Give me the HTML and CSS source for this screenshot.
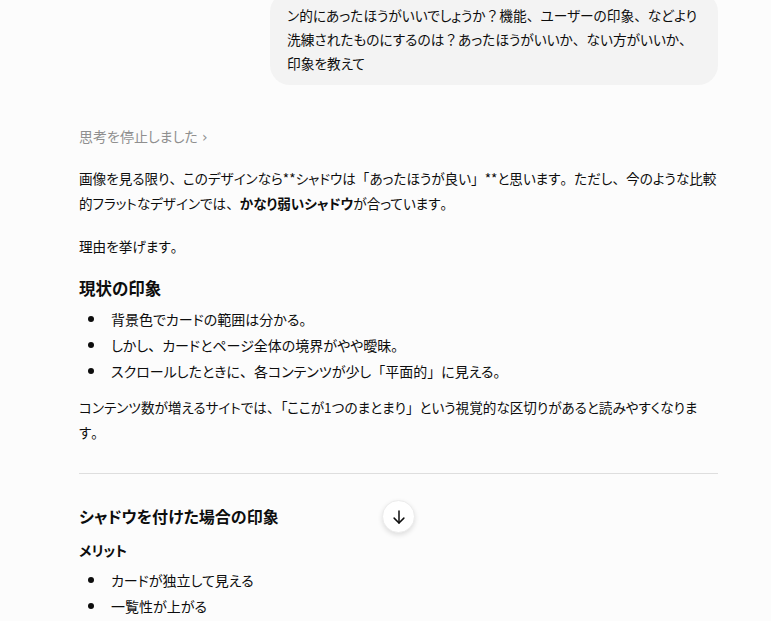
FILE: index.html
```html
<!DOCTYPE html>
<html lang="ja">
<head>
<meta charset="utf-8">
<link rel="stylesheet" href="styles.css">
</head>
<body>
<div class="page">
  <div class="thread">
    <div class="user-row">
      <div class="bubble">ン的にあったほうがいいでしょうか<span class="pn">？</span>機能<span class="pn">、</span>ユーザーの印象<span class="pn">、</span>などより洗練されたものにするのは<span class="pn">？</span>あったほうがいいか<span class="pn">、</span>ない方がいいか<span class="pn">、</span>印象を教えて</div>
    </div>
    <div class="thinking">思考を停止しました <span class="chev">›</span></div>
    <p class="para p1">画像を見る限り<span class="pn">、</span>このデザインなら**シャドウは<span class="pn">「</span>あったほうが良い<span class="pn">」</span>**と思います<span class="pn">。</span>ただし<span class="pn">、</span>今のような比較的フラットなデザインでは<span class="pn">、</span><b>かなり弱いシャドウ</b>が合っています<span class="pn">。</span></p>
    <p class="para p2">理由を挙げます<span class="pn">。</span></p>
    <h3 class="h3">現状の印象</h3>
    <ul class="list l1">
      <li>背景色でカードの範囲は分かる<span class="pn">。</span></li>
      <li>しかし<span class="pn">、</span>カードとページ全体の境界がやや曖昧<span class="pn">。</span></li>
      <li>スクロールしたときに<span class="pn">、</span>各コンテンツが少し<span class="pn">「</span>平面的<span class="pn">」</span>に見える<span class="pn">。</span></li>
    </ul>
    <p class="para p3">コンテンツ数が増えるサイトでは<span class="pn">、</span>「ここが1つのまとまり<span class="pn">」</span>という視覚的な区切りがあると読みやすくなります<span class="pn">。</span></p>
    <hr class="divider">
    <h2 class="h2">シャドウを付けた場合の印象</h2>
    <h4 class="h4">メリット</h4>
    <ul class="list l2">
      <li>カードが独立して見える</li>
      <li>一覧性が上がる</li>
    </ul>
  </div>
  <button class="scroll-btn" aria-label="scroll down">
    <svg width="18" height="18" viewBox="0 0 24 24" fill="none" stroke="#0d0d0d" stroke-width="2" stroke-linecap="round" stroke-linejoin="round"><path d="M12 4v16"/><path d="M5.5 13.5 12 20l6.5-6.5"/></svg>
  </button>
</div>
</body>
</html>
```
FILE: styles.css
```css
html, body {
  margin: 0;
  padding: 0;
  background: #fcfcfc;
  overflow: hidden;
}
body {
  font-family: "Noto Sans CJK JP", "Noto Sans", sans-serif;
  font-feature-settings: "palt";
  color: #0d0d0d;
  font-size: 14px;
}
.pn {
  font-feature-settings: normal;
}
.page {
  position: relative;
  width: 771px;
  height: 621px;
  overflow: hidden;
}
.thread {
  width: 639px;
  margin-left: 79px;
}
.user-row {
  display: flex;
  justify-content: flex-end;
}
.bubble {
  margin-top: -8px;
  width: 414px;
  padding: 11px 17px 10px 17px;
  background: #f3f3f3;
  border-radius: 20px;
  font-size: 13.7px;
  line-height: 24px;
}
.thinking {
  margin-top: 41px;
  line-height: 20px;
  color: #8f8f8f;
}
.chev {
  font-family: "DejaVu Sans", sans-serif;
  font-size: 14px;
  margin-left: 1px;
}
.para {
  margin: 0;
  font-size: 13.6px;
  line-height: 25px;
}
.p1 { margin-top: 19px; }
.p2 { margin-top: 18px; }
.p3 { margin-top: 12px; }
b { font-weight: 700; }
.h3 {
  margin: 17px 0 0;
  font-size: 16.5px;
  line-height: 24px;
  font-weight: 700;
}
.h2 {
  margin: 29px 0 0;
  font-size: 16px;
  line-height: 26px;
  font-weight: 700;
}
.h4 {
  margin: 9px 0 0;
  font-size: 14px;
  line-height: 24px;
  font-weight: 700;
}
.list {
  margin: 0;
  padding: 0;
  list-style: none;
}
.l1 { margin-top: 7px; }
.l2 { margin-top: 6px; }
.list li {
  position: relative;
  padding-left: 32px;
  line-height: 24px;
  margin-bottom: 2px;
}
.list li::before {
  content: "";
  position: absolute;
  left: 9px;
  top: 9px;
  width: 6px;
  height: 6px;
  border-radius: 50%;
  background: #0d0d0d;
}
.divider {
  margin: 28px 0 0;
  border: 0;
  border-top: 1px solid #dedede;
  height: 0;
}
.scroll-btn {
  position: absolute;
  left: 382px;
  top: 500px;
  width: 33px;
  height: 33px;
  border-radius: 50%;
  border: 1px solid #ececec;
  background: #ffffff;
  box-shadow: 0 2px 5px rgba(0,0,0,0.12);
  display: flex;
  align-items: center;
  justify-content: center;
  padding: 0;
}
```
